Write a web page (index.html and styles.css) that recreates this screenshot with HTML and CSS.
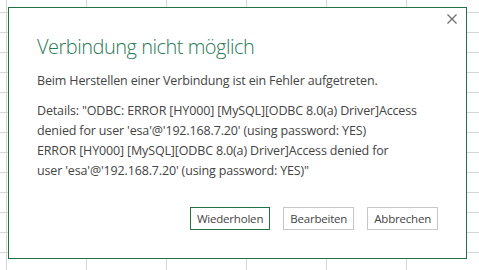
FILE: index.html
```html
<!DOCTYPE html>
<html lang="de">
<head>
    <meta charset="UTF-8">
    <meta name="viewport" content="width=device-width, initial-scale=1.0">
    <title>Verbindung nicht möglich</title>
    <link rel="stylesheet" href="styles.css">
</head>
<body>
    <!-- Spreadsheet grid behind the dialog -->
    <div class="sheet">
        <div class="dialog">
            <div class="titlebar">
                <button class="close" title="Schließen">
                    <svg width="10" height="10" viewBox="0 0 10 10">
                        <path d="M0.5 0.5 L9.5 9.5 M9.5 0.5 L0.5 9.5" stroke="#6b6b6b" stroke-width="1.2" fill="none"/>
                    </svg>
                </button>
            </div>
            <h1 class="title">Verbindung nicht möglich</h1>
            <p class="message">Beim Herstellen einer Verbindung ist ein Fehler aufgetreten.</p>
            <p class="details">Details: "ODBC: ERROR [HY000] [MySQL][ODBC 8.0(a) Driver]Access<br>denied for user 'esa'@'192.168.7.20' (using password: YES)<br>ERROR [HY000] [MySQL][ODBC 8.0(a) Driver]Access denied for<br>user 'esa'@'192.168.7.20' (using password: YES)"</p>
            <div class="actions">
                <button class="btn default">Wiederholen</button>
                <button class="btn">Bearbeiten</button>
                <button class="btn">Abbrechen</button>
            </div>
        </div>
    </div>
</body>
</html>
```

FILE: styles.css
```css
html, body {
    margin: 0;
    padding: 0;
}
body {
    width: 479px;
    height: 270px;
    overflow: hidden;
    font-family: "Open Sans", "Noto Sans", sans-serif;
    color: #444;
    background-color: #fff;
}
.sheet {
    height: 270px;
    padding: 7px 0 0 8px;
    box-sizing: border-box;
    background-image:
        linear-gradient(to right, #d6d6d6 1px, transparent 1px),
        linear-gradient(to bottom, #d6d6d6 1px, transparent 1px);
    background-size: 80px 100%, 100% 20px;
    background-position: 6px 0, 0 12px;
}
.dialog {
    width: 459px;
    height: 252px;
    box-sizing: border-box;
    background: #fff;
    border: 1px solid #217346;
    padding: 0 28px 28px;
}
.titlebar {
    display: flex;
    justify-content: flex-end;
    padding-top: 6px;
    margin-right: -19px;
}
.close {
    width: 10px;
    height: 10px;
    padding: 0;
    border: none;
    background: none;
    display: flex;
}
.title {
    margin: 9px 0 0;
    font-size: 20px;
    line-height: 28px;
    font-weight: 300;
    letter-spacing: -0.5px;
    color: #2a7a55;
}
.message,
.details {
    font-size: 12.5px;
    line-height: 20px;
    letter-spacing: -0.15px;
    margin: 10px 0 0;
    white-space: nowrap;
}
.actions {
    display: flex;
    justify-content: flex-end;
    gap: 13px;
    margin-top: 26px;
}
.btn {
    height: 23px;
    padding: 0 6px;
    font-family: "Open Sans", "Noto Sans", sans-serif;
    font-size: 11.5px;
    letter-spacing: -0.2px;
    color: #444;
    background: #fff;
    border: 1px solid #c6c6c6;
}
.btn.default {
    border-color: #217346;
}
```
